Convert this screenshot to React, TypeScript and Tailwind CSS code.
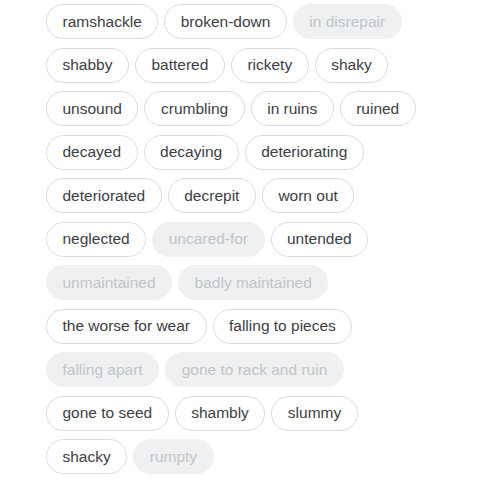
import React from "react";

const items: [string, boolean][] = [
  ["ramshackle", false],
  ["broken-down", false],
  ["in disrepair", true],
  ["shabby", false],
  ["battered", false],
  ["rickety", false],
  ["shaky", false],
  ["unsound", false],
  ["crumbling", false],
  ["in ruins", false],
  ["ruined", false],
  ["decayed", false],
  ["decaying", false],
  ["deteriorating", false],
  ["deteriorated", false],
  ["decrepit", false],
  ["worn out", false],
  ["neglected", false],
  ["uncared-for", true],
  ["untended", false],
  ["unmaintained", true],
  ["badly maintained", true],
  ["the worse for wear", false],
  ["falling to pieces", false],
  ["falling apart", true],
  ["gone to rack and ruin", true],
  ["gone to seed", false],
  ["shambly", false],
  ["slummy", false],
  ["shacky", false],
  ["rumpty", true],
];

export default function App() {
  return (
    <div className="w-[480px] h-[480px] bg-white overflow-hidden" style={{ fontFamily: '"Liberation Sans", Arial, sans-serif' }}>
      <div className="ml-[46px] mt-[4px] w-[384px] flex flex-wrap gap-x-[6px] gap-y-[8.5px]">
        {items.map(([t, d]) => (
          <div
            key={t}
            className={
              d
                ? "h-[35px] px-[15.5px] flex items-center rounded-full border border-[#eef0f1] bg-[#eef0f1] text-[#c2c5c8] text-[15.5px] whitespace-nowrap"
                : "h-[35px] px-[15.5px] flex items-center rounded-full border border-[#dadce0] bg-white text-[#3c4043] text-[15.5px] whitespace-nowrap"
            }
          >
            {t}
          </div>
        ))}
      </div>
    </div>
  );
}
